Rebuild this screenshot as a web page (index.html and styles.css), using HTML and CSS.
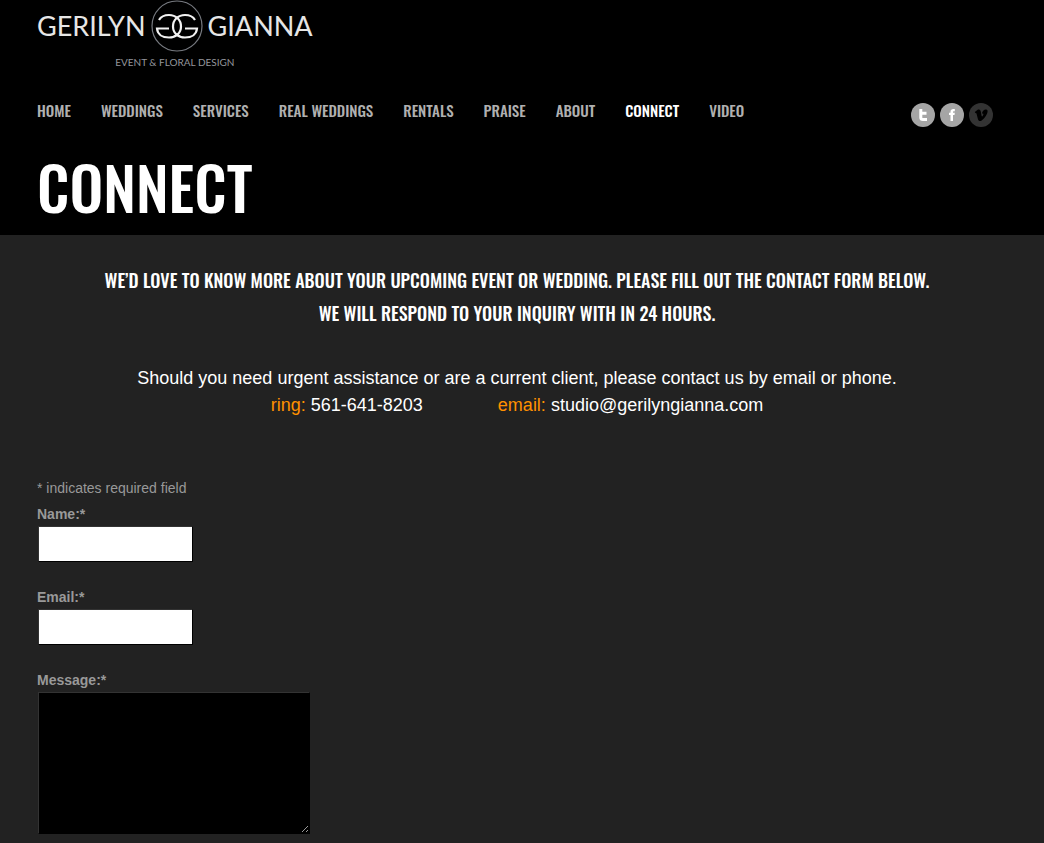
FILE: index.html
```html
<!DOCTYPE html>
<html lang="en">
<head>
<meta charset="UTF-8">
<meta name="viewport" content="width=device-width, initial-scale=1.0">
<title>Connect | Gerilyn Gianna</title>
<link rel="stylesheet" href="styles.css">
</head>
<body>

<header class="header">
  <a class="logo" href="#">
    <span class="logo-name">
      <span>GERILYN</span>
      <svg class="logo-mark" viewBox="0 0 52 52" fill="none" aria-hidden="true">
        <circle cx="26" cy="26" r="25" stroke="#777a80" stroke-width="1.2"/>
        <g stroke="#f2f2f2" stroke-width="2.2">
          <path d="M8 20C10 16.500 13.500 15 18 15C25 15 30 20 30 26.500C30 33 25 37.500 18 37.500C11 37.500 6.500 34 6 28.500H18"/>
          <path d="M44 20C42 16.500 38.500 15 34 15C27 15 22 20 22 26.500C22 33 27 37.500 34 37.500C41 37.500 45.500 34 46 28.500H34"/>
        </g>
      </svg>
      <span>GIANNA</span>
    </span>
    <span class="logo-tagline">EVENT &amp; FLORAL DESIGN</span>
  </a>

  <div class="bar">
    <nav class="nav">
      <a href="#">HOME</a>
      <a href="#">WEDDINGS</a>
      <a href="#">SERVICES</a>
      <a href="#">REAL WEDDINGS</a>
      <a href="#">RENTALS</a>
      <a href="#">PRAISE</a>
      <a href="#">ABOUT</a>
      <a href="#" class="active">CONNECT</a>
      <a href="#">VIDEO</a>
    </nav>
    <div class="social">
      <a href="#" aria-label="Twitter">
        <svg viewBox="0 0 24 24"><circle cx="12" cy="12" r="12" fill="#a5a5a5"/><path d="M9.800 6V14.500Q9.800 16.500 12 16.500H16M8.500 10.300H15.500" fill="none" stroke="#fff" stroke-width="3"/></svg>
      </a>
      <a href="#" aria-label="Facebook">
        <svg viewBox="0 0 24 24"><circle cx="12" cy="12" r="12" fill="#a5a5a5"/><path d="M10.500 18V12H9V9.800H10.500V9C10.500 6.800 11.600 6 13.500 6H14.800V8.200H14C13.200 8.200 13 8.500 13 9.200V9.800H14.800L14.500 12H13V18Z" fill="#fff"/></svg>
      </a>
      <a href="#" aria-label="Vimeo">
        <svg viewBox="0 0 24 24"><circle cx="12" cy="12" r="12" fill="#333"/><path d="M5.800 9L9 6.600C10.800 5.900 11.600 7.200 11.900 9L12.500 12.500C12.900 13.900 13.300 13.600 14 12.400C14.800 11 14.600 10.200 12.900 10.600C13.600 7.600 15.400 6.200 17.200 6.500C19.100 6.800 18.800 9.200 17.900 11C16.400 14 14 16.900 12 17.900C10.400 18.500 9.400 17.700 8.900 16L7.600 11C7.300 9.900 7.100 9.900 6.500 10.200Z"/></svg>
      </a>
    </div>
  </div>

  <h1>CONNECT</h1>
</header>

<main class="content">
  <h2>WE’D LOVE TO KNOW MORE ABOUT YOUR UPCOMING EVENT OR WEDDING. PLEASE FILL OUT THE CONTACT FORM BELOW.<br>WE WILL RESPOND TO YOUR INQUIRY WITH IN 24 HOURS.</h2>

  <div class="contact">
    <p>Should you need urgent assistance or are a current client, please contact us by email or phone.</p>
    <p class="details">
      <span><span class="key">ring:</span> 561-641-8203</span>
      <span><span class="key">email:</span> studio@gerilyngianna.com</span>
    </p>
  </div>

  <form class="form">
    <p class="note">* indicates required field</p>
    <div class="field">
      <label for="name">Name:*</label>
      <input type="text" id="name">
    </div>
    <div class="field">
      <label for="email">Email:*</label>
      <input type="email" id="email">
    </div>
    <div class="field">
      <label for="message">Message:*</label>
      <textarea id="message"></textarea>
    </div>
  </form>
</main>

</body>
</html>
```
FILE: styles.css
```css
* {
  box-sizing: border-box;
}
body {
  margin: 0;
  background: #222;
  color: #999;
  font-family: "Liberation Sans", Arial, sans-serif;
  font-size: 14px;
}
h1, h2, p {
  margin: 0;
}
a {
  color: inherit;
  text-decoration: none;
}
.header {
  background: #000;
  padding: 0 47px 0 37px;
}

/* logo */
.logo {
  display: inline-flex;
  flex-direction: column;
  align-items: center;
  font-family: Lato, sans-serif;
  color: #e6e6e6;
}
.logo-name {
  display: flex;
  align-items: center;
  gap: 5px;
  font-size: 27px;
  line-height: 52px;
}
.logo-mark {
  width: 52px;
  height: 52px;
}
.logo-tagline {
  font-size: 10px;
  line-height: 20px;
  color: #94969c;
}

/* menu */
.bar {
  display: flex;
  justify-content: space-between;
  margin-top: 26px;
}
.nav {
  display: flex;
  gap: 30px;
  font-family: Oswald, "Open Sans Condensed", sans-serif;
  font-size: 15px;
  font-weight: 500;
  line-height: 24px;
  color: #b0b0b0;
}
.nav .active {
  color: #fff;
}
.social {
  display: flex;
  gap: 5px;
  padding: 5px 4px 0 0;
}
.social svg {
  display: block;
  width: 24px;
  height: 24px;
}
h1 {
  padding: 19px 0 9px;
  font-family: Oswald, "Open Sans Condensed", sans-serif;
  font-size: 60px;
  font-weight: 500;
  line-height: 80px;
  color: #fff;
}

/* page */
.content {
  padding: 29px 47px 0 37px;
}
h2 {
  font-family: Oswald, "Open Sans Condensed", sans-serif;
  font-size: 18px;
  font-weight: 500;
  line-height: 33px;
  text-align: center;
  color: #fff;
}
.contact {
  margin-top: 35px;
  font-size: 18px;
  line-height: 27px;
  text-align: center;
  color: #fff;
}
.details {
  display: flex;
  justify-content: center;
  gap: 75px;
}
.key {
  color: #ff9000;
}

/* form */
.form {
  margin-top: 56px;
}
.note {
  line-height: 27px;
}
.field {
  margin-bottom: 23px;
}
.field:last-child {
  margin-bottom: 9px;
}
.field label {
  display: block;
  font-weight: bold;
  line-height: 24px;
}
.field input,
.field textarea {
  display: block;
  border: 1px solid #333;
  margin: 0 0 0 1px;
  font: inherit;
}
.field input {
  width: 155px;
  height: 36px;
  background: #fff;
  border-right-color: #000;
  border-bottom-color: #000;
}
.field textarea {
  width: 272px;
  height: 142px;
  background: #000;
  color: #999;
  border-right-color: #000;
  border-bottom-color: #000;
}
```
